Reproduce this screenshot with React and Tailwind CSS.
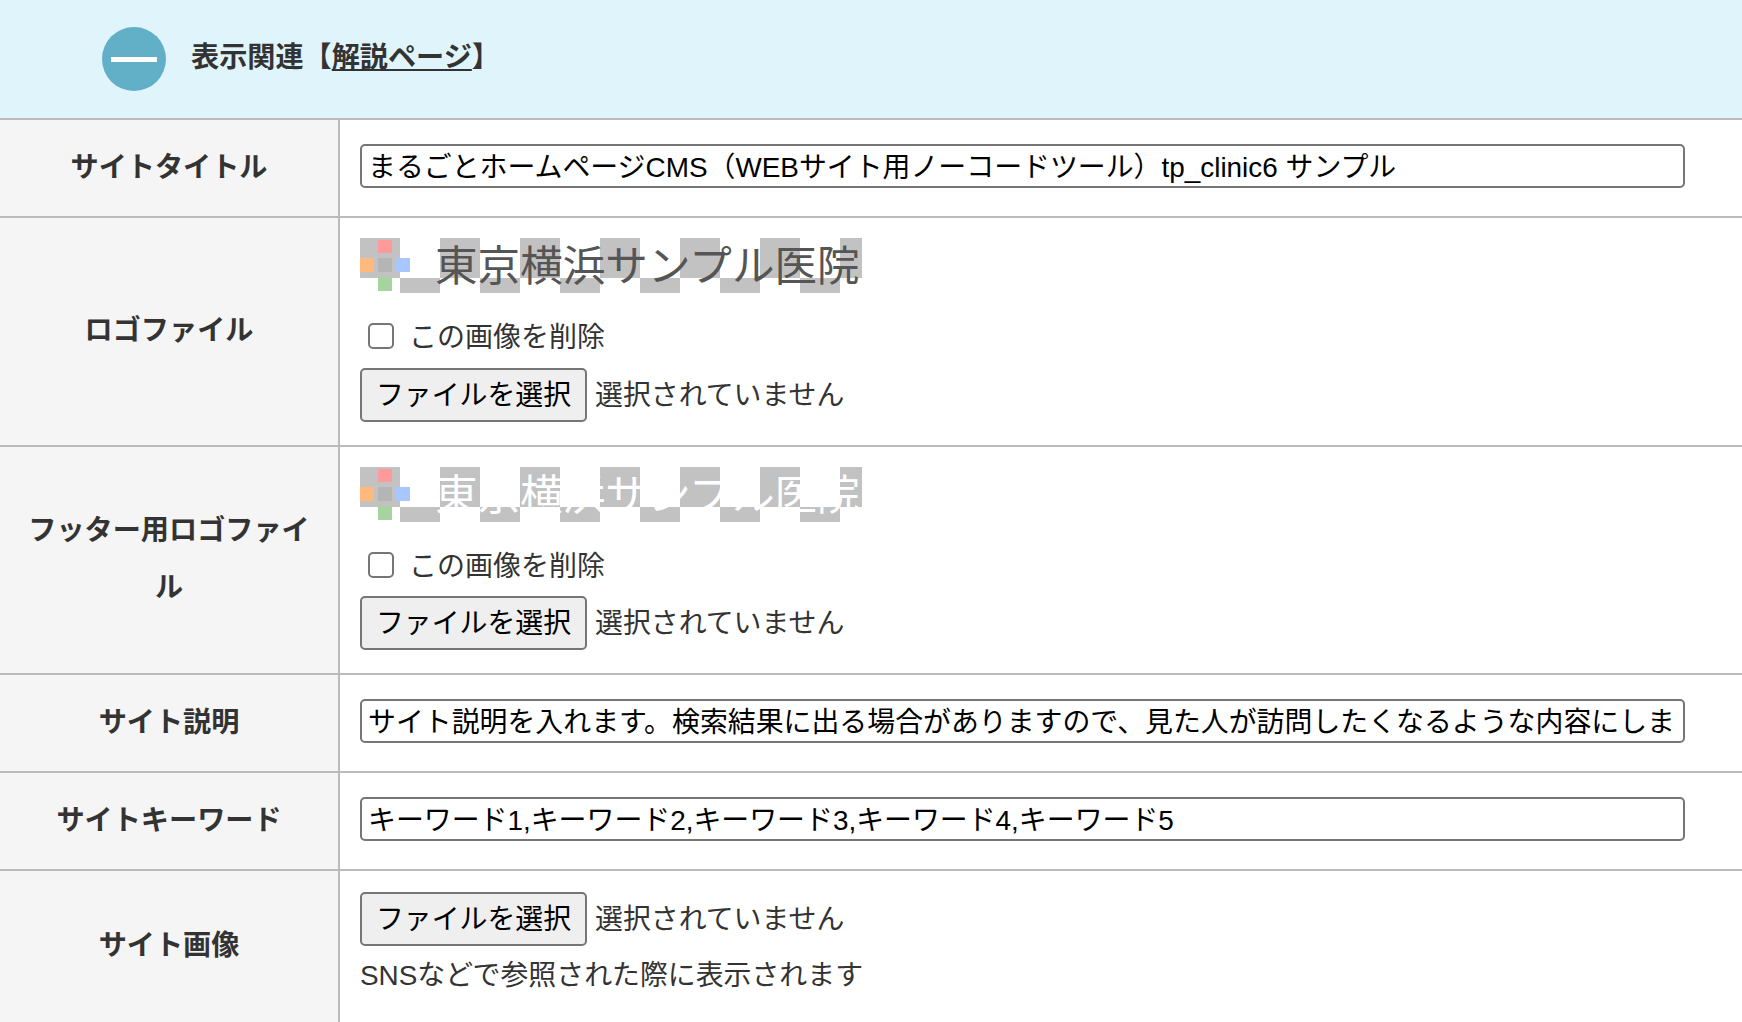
const font = { fontFamily: '"Liberation Sans", "Noto Sans CJK JP", sans-serif' };

const LogoImage = ({ color }) => {
  const cells = [];
  for (let i = 0; i < 13; i++) {
    cells.push(<rect key={i} x={i * 40} y={i % 2 === 0 ? 0 : 40} width="40" height={i % 2 === 0 ? 40 : 15} fill="#c2c2c2" />);
  }
  return (
    <svg width="502" height="55" viewBox="0 0 502 55" className="block">
      {cells}
      <rect x="18" y="2" width="14" height="13" fill="#ff9a9a" />
      <rect x="0" y="20" width="14" height="14" fill="#ffb97f" />
      <rect x="18" y="20" width="14" height="14" fill="#b5b5b5" />
      <rect x="36" y="20" width="14" height="14" fill="#a8c6ff" />
      <rect x="18" y="39" width="14" height="14" fill="#a6d3a0" />
      <text x="75" y="43" fill={color} fontSize="42.6" fontWeight="400" style={{ fontFamily: '"Noto Sans CJK JP", sans-serif' }}>
        東京横浜サンプル医院
      </text>
    </svg>
  );
};

const FilePicker = () => (
  <div className="flex items-center gap-[8px]">
    <button className="h-[54px] w-[227px] rounded-[5px] border-2 border-[#767676] bg-[#efefef] pt-[2px] text-center text-[27.9px] text-black">
      ファイルを選択
    </button>
    <span className="pt-[2px] text-[27.9px] text-[#333]">選択されていません</span>
  </div>
);

const DeleteCheck = () => (
  <label className="flex h-[26px] items-center pl-[8px]">
    <input type="checkbox" className="h-[26px] w-[26px] appearance-none rounded-[5px] border-2 border-[#767676] bg-white" />
    <span className="ml-[15px] pt-[4px] text-[28px] text-[#333]">この画像を削除</span>
  </label>
);

const TextInput = ({ value }) => (
  <input
    readOnly
    value={value}
    style={font}
    className="h-[44px] w-[1325px] rounded-[5px] border-2 border-[#767676] bg-white px-[6px] pb-[2px] text-[27.9px] text-black outline-none"
  />
);

const Row = ({ label, rowClass, cellClass, children }) => (
  <div className={`grid grid-cols-[338px_1fr] ${rowClass}`}>
    <div className="flex items-center justify-center bg-[#f5f5f5] px-[20px] pb-[2px] text-center text-[28.15px] leading-[57px] font-bold text-[#333]">
      {label}
    </div>
    <div className={`border-l-2 border-[#bbb] pl-[20px] ${cellClass}`}>{children}</div>
  </div>
);

const LogoCell = ({ color, pickerClass }) => (
  <>
    <LogoImage color={color} />
    <div className="mt-[30px]">
      <DeleteCheck />
    </div>
    <div className={pickerClass}>
      <FilePicker />
    </div>
  </>
);

export default function App() {
  return (
    <div style={font} className="h-[1022px] w-full overflow-hidden bg-white">
      <div className="flex h-[120px] items-center border-b-2 border-[#bbb] bg-[#e0f4fb] pl-[102px]">
        <div className="flex h-[64px] w-[64px] items-center justify-center rounded-full bg-[#62b0c8]">
          <div className="h-[5px] w-[46px] bg-white" />
        </div>
        <h2 className="ml-[25px] pb-[2px] text-[28.15px] font-bold text-[#333]">
          表示関連【<a className="underline">解説ページ</a>】
        </h2>
      </div>

      <Row label="サイトタイトル" rowClass="h-[98px] border-b-2 border-[#bbb]" cellClass="pt-[24px]">
        <TextInput value="まるごとホームページCMS（WEBサイト用ノーコードツール）tp_clinic6 サンプル" />
      </Row>
      <Row label="ロゴファイル" rowClass="h-[229px] border-b-2 border-[#bbb]" cellClass="pt-[20px]">
        <LogoCell color="#555555" pickerClass="mt-[19px]" />
      </Row>
      <Row label="フッター用ロゴファイル" rowClass="h-[228px] border-b-2 border-[#bbb]" cellClass="pt-[20px]">
        <LogoCell color="#ffffff" pickerClass="mt-[18px]" />
      </Row>
      <Row label="サイト説明" rowClass="h-[98px] border-b-2 border-[#bbb]" cellClass="pt-[24px]">
        <TextInput value="サイト説明を入れます。検索結果に出る場合がありますので、見た人が訪問したくなるような内容にします。" />
      </Row>
      <Row label="サイトキーワード" rowClass="h-[98px] border-b-2 border-[#bbb]" cellClass="pt-[24px]">
        <TextInput value="キーワード1,キーワード2,キーワード3,キーワード4,キーワード5" />
      </Row>
      <Row label="サイト画像" rowClass="h-[151px]" cellClass="pt-[21px]">
        <FilePicker />
        <p className="mt-[10px] text-[27.9px] leading-[40px] text-[#333]">SNSなどで参照された際に表示されます</p>
      </Row>
    </div>
  );
}
